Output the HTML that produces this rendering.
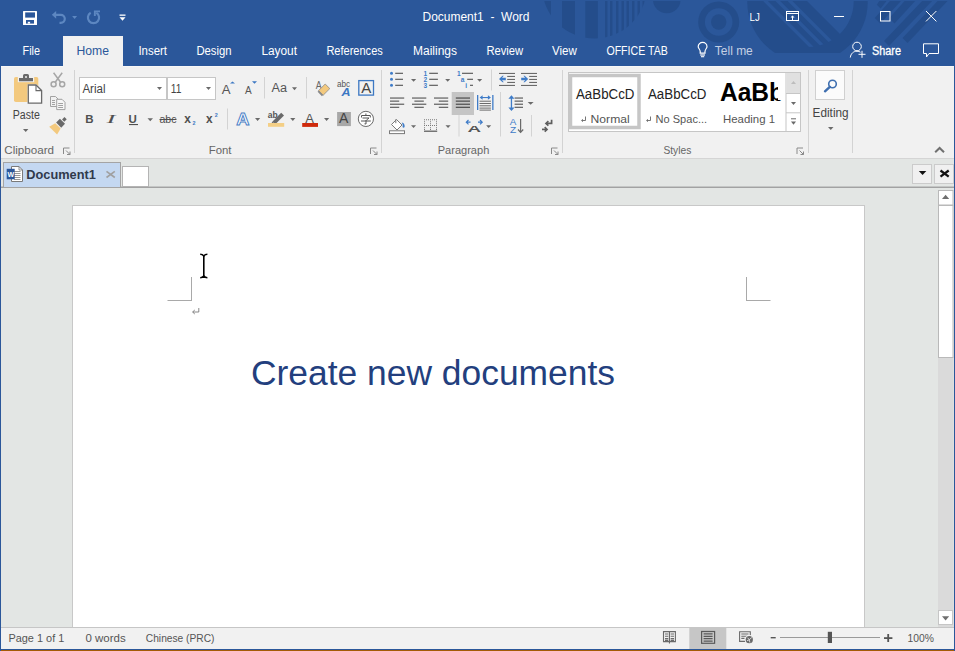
<!DOCTYPE html>
<html><head><meta charset="utf-8">
<style>
html,body{margin:0;padding:0;width:955px;height:651px;overflow:hidden;background:#e3e6e4;}
svg{position:absolute;left:0;top:0;display:block;}
text{font-family:"Liberation Sans",sans-serif;}
</style></head>
<body>
<svg width="955" height="651" viewBox="0 0 955 651">
<!-- ===== title + tabs (blue) ===== -->
<rect x="0" y="0" width="955" height="66" fill="#2b579a"/>
<g id="pattern" fill="#244d8b">
<clipPath id="cp1"><circle cx="594.5" cy="-13.9" r="52.4"/></clipPath>
<g clip-path="url(#cp1)">
<rect x="540" y="0" width="11" height="40"/>
<rect x="562" y="0" width="13" height="40"/>
<rect x="585.3" y="0" width="12.5" height="40"/>
<rect x="605" y="0" width="2.4" height="40"/><rect x="610" y="0" width="2.4" height="40"/>
<rect x="616" y="0" width="2.4" height="40"/><rect x="621.5" y="0" width="2.4" height="40"/>
<rect x="626.5" y="0" width="2.4" height="40"/><rect x="632" y="0" width="2.4" height="40"/>
<rect x="637.5" y="0" width="2.4" height="40"/><rect x="642.5" y="0" width="2.4" height="40"/>
</g>
<circle cx="666.8" cy="-0.5" r="13.8"/>
<circle cx="718.7" cy="22" r="20.5"/>
<circle cx="718.7" cy="22" r="13.8" fill="#2b579a"/>
<circle cx="718.7" cy="22" r="7.7"/>
<clipPath id="cp2"><rect x="700" y="0" width="200" height="53"/></clipPath>
<clipPath id="cp3"><circle cx="808" cy="1.3" r="45.7"/></clipPath>
<g clip-path="url(#cp2)">
<circle cx="807.5" cy="2.3" r="60.2"/>
<g clip-path="url(#cp3)" stroke="#2b579a" stroke-width="3.4">
<line x1="764.5" y1="0" x2="824.5" y2="60"/>
<line x1="776.8" y1="0" x2="836.8" y2="60"/>
<line x1="789" y1="0" x2="849" y2="60"/>
<polygon points="801,-5 900,-5 900,60 866,60" stroke="none" fill="#2b579a"/>
</g>
</g>
<polygon points="880.6,-1 888.1,-1 880.6,8.5 876.9,4.8"/>
<polygon points="891.7,-1 902.8,-1 880.3,23.5 874.8,18.0"/>
<polygon points="906.4,-1 917.0,-1 894.5,23.5 889.2,18.2"/>
<polygon points="924.0,-1 934.0,-1 889.0,46.0 884.0,41.0"/>
<polygon points="939.5,-1 949.5,-1 907.5,43.0 902.5,38.0"/>
</g>
<rect x="0" y="0" width="955" height="1" fill="#2b579a"/>
<!-- title icons -->
<g fill="#ffffff">
<rect x="23" y="11" width="14" height="14" rx="0.5"/>
<rect x="25.2" y="12.4" width="9.8" height="5.2" fill="#2b579a"/>
<rect x="26" y="20" width="8" height="3.6" fill="#2b579a"/>
<rect x="27.8" y="21.8" width="2.3" height="1.8"/>
</g>
<g fill="none" stroke="#5d87c1" stroke-width="2.2">
<path d="M54,14.8 H60.8 A4,4 0 0 1 60.8,22.8 H59.5"/>
<path d="M90.7,12.75 A5.6,5.6 0 1 0 96.3,12.75"/>
</g>
<g fill="#5d87c1">
<path d="M51.8,14.8 L56.2,10.9 L56.2,18.7 Z"/>
<path d="M72.1,15.9 H77.1 L74.6,18.9 Z"/>
<path d="M93.9,10.4 H100 V12.3 H95.8 V16 H93.9 Z"/>
</g>
<g fill="#ffffff">
<rect x="119.5" y="14.5" width="6" height="1.3"/>
<path d="M119.5,17.2 L125.5,17.2 L122.5,20.8 Z"/>
</g>
<g fill="none" stroke="#ffffff" stroke-width="1">
<rect x="786.5" y="11.5" width="12" height="9"/>
<line x1="786.5" y1="13.5" x2="798.5" y2="13.5"/>
<line x1="792.5" y1="16.5" x2="792.5" y2="20.5"/>
<rect x="880.5" y="11.5" width="9.5" height="9.5"/>
<line x1="926" y1="11" x2="936.4" y2="21.4"/>
<line x1="936.4" y1="11" x2="926" y2="21.4"/>
</g>
<path d="M790.5,17.6 L792.5,15.4 L794.5,17.6 Z" fill="#ffffff"/>
<rect x="834" y="16" width="10" height="1" fill="#ffffff"/>
<!-- tab row icons -->
<g fill="none" stroke="#ffffff" stroke-width="1">
<path d="M700.2,53.2 V51.6 C700.2,49.3 698.2,48.4 698.2,46.8 A4.4,4.4 0 0 1 707,46.8 C707,48.4 705,49.3 705,51.6 V53.2 Z" stroke="#ffffff" stroke-width="1.2"/>
<line x1="700.2" y1="55" x2="705" y2="55" stroke="#ffffff" stroke-width="1.2"/>
<line x1="701" y1="56.7" x2="704.2" y2="56.7" stroke="#ffffff" stroke-width="1.1"/>
<circle cx="857" cy="46.5" r="4.3"/>
<path d="M850.3,57.5 C850.8,53.5 853.5,51.2 857,51.2 C858.5,51.2 859.5,51.6 860.5,52.2"/>
<line x1="858.5" y1="54.3" x2="865.5" y2="54.3"/>
<line x1="862" y1="50.8" x2="862" y2="57.8"/>
<path d="M923.5,43.8 H938.5 V53.5 H929 L926.5,57 V53.5 H923.5 Z"/>
</g>

<!-- ===== ribbon ===== -->
<rect x="1" y="66" width="953" height="92" fill="#f1f1f1"/>
<rect x="1" y="66" width="953" height="1" fill="#f7f7f7"/>
<rect x="1" y="158" width="953" height="1" fill="#d5d5d5"/>
<!-- Home tab -->
<rect x="63" y="36" width="60" height="31" fill="#f1f1f1"/>
<!-- title texts -->
<g fill="#ffffff" font-size="12.5">
<text x="422.5" y="21" textLength="107" lengthAdjust="spacingAndGlyphs">Document1&#160; -&#160; Word</text>
<text x="749.6" y="20.8" font-size="11.5" textLength="10.3" lengthAdjust="spacingAndGlyphs">LJ</text>
</g>
<g fill="#ffffff" font-size="12">
<text x="22.5" y="55" textLength="17.5" lengthAdjust="spacingAndGlyphs">File</text>
<text x="138.4" y="55" textLength="28.6" lengthAdjust="spacingAndGlyphs">Insert</text>
<text x="196.4" y="55" textLength="35.2" lengthAdjust="spacingAndGlyphs">Design</text>
<text x="261.4" y="55" textLength="35.6" lengthAdjust="spacingAndGlyphs">Layout</text>
<text x="326.4" y="55" textLength="56.4" lengthAdjust="spacingAndGlyphs">References</text>
<text x="413" y="55" textLength="44" lengthAdjust="spacingAndGlyphs">Mailings</text>
<text x="486.4" y="55" textLength="36.8" lengthAdjust="spacingAndGlyphs">Review</text>
<text x="552" y="55" textLength="24.8" lengthAdjust="spacingAndGlyphs">View</text>
<text x="606.4" y="55" textLength="61.4" lengthAdjust="spacingAndGlyphs">OFFICE TAB</text>
<text x="714.8" y="55" fill="#c5d0e4" textLength="38" lengthAdjust="spacingAndGlyphs">Tell me</text>
<text x="872" y="55" stroke="#ffffff" stroke-width="0.3" textLength="29" lengthAdjust="spacingAndGlyphs">Share</text>
</g>
<text x="76.5" y="55" font-size="12" fill="#2b579a" textLength="32.5" lengthAdjust="spacingAndGlyphs">Home</text>
<!-- ===== ribbon content ===== -->
<!-- separators -->
<g fill="#d3d3d3">
<rect x="74" y="70" width="1" height="83"/>
<rect x="381" y="70" width="1" height="83"/>
<rect x="562" y="70" width="1" height="83"/>
<rect x="808" y="70" width="1" height="83"/>
<rect x="852" y="70" width="1" height="83"/>
<rect x="264" y="77" width="1" height="21.5"/>
<rect x="306" y="77" width="1" height="21.5"/>
<rect x="227" y="108.5" width="1" height="21"/>
<rect x="491" y="69.5" width="1" height="21"/>
<rect x="500" y="92" width="1" height="44.5"/>
<rect x="458.5" y="115" width="1" height="21.5"/>
<rect x="531" y="115" width="1" height="21.5"/>
</g>
<!-- group labels -->
<g fill="#666666" font-size="11">
<text x="4.3" y="153.8" textLength="49.7" lengthAdjust="spacingAndGlyphs">Clipboard</text>
<text x="208.7" y="153.8" textLength="22.8" lengthAdjust="spacingAndGlyphs">Font</text>
<text x="437.7" y="153.8" textLength="51.6" lengthAdjust="spacingAndGlyphs">Paragraph</text>
<text x="663.4" y="153.8" textLength="27.9" lengthAdjust="spacingAndGlyphs">Styles</text>
</g>
<!-- dialog launchers -->
<g fill="none" stroke="#8a8a8a" stroke-width="1">
<path d="M63.5,154 V148 H69.5"/><path d="M66,150.5 L70,154.5 M70,151.5 V154.5 H67"/>
<path d="M370.5,154 V148 H376.5"/><path d="M373,150.5 L377,154.5 M377,151.5 V154.5 H374"/>
<path d="M551.5,154 V148 H557.5"/><path d="M554,150.5 L558,154.5 M558,151.5 V154.5 H555"/>
<path d="M797,154 V148 H803"/><path d="M799.5,150.5 L803.5,154.5 M803.5,151.5 V154.5 H800.5"/>
</g>
<!-- collapse caret -->
<path d="M935.2,152.3 L939.6,148 L944,152.3" fill="none" stroke="#707070" stroke-width="2"/>

<!-- ===== Clipboard ===== -->
<rect x="14" y="77" width="24.3" height="25" rx="1.8" fill="#f3c97e"/>
<rect x="17.8" y="76.2" width="16.4" height="6" fill="#f1f1f1"/>
<path d="M19,78 H23 V75.5 Q23,74 24.5,74 H27.5 Q29,74 29,75.5 V78 H33 V81.3 H19 Z" fill="#6a6a6a"/>
<circle cx="26" cy="77" r="1" fill="#f1f1f1"/>
<path d="M27.5,84.2 H36.5 L42.4,90 V104 H27.5 Z" fill="#f1f1f1"/>
<path d="M28.3,85 H36 L41.6,90.6 V103.2 H28.3 Z" fill="#ffffff" stroke="#6a6a6a" stroke-width="1.3"/>
<path d="M36,85 V90.6 H41.6" fill="none" stroke="#6a6a6a" stroke-width="1.1"/>
<text x="12.7" y="118.8" font-size="12" fill="#444444" textLength="27.1" lengthAdjust="spacingAndGlyphs">Paste</text>
<path d="M23,129 H28.4 L25.7,132 Z" fill="#6a6a6a"/>
<!-- scissors -->
<g fill="none" stroke="#a6a6a6" stroke-width="1.5">
<circle cx="53.6" cy="84.3" r="2.5"/>
<circle cx="62.2" cy="84.3" r="2.5"/>
<path d="M55.2,82.2 L62.2,72.8 M60.6,82.2 L53.6,72.8"/>
</g>
<!-- copy -->
<g fill="#f1f1f1" stroke="#a2a2a2" stroke-width="1">
<path d="M50.5,96.5 H55.5 L58.5,99.5 V106.5 H50.5 Z"/>
<path d="M56.7,99.3 H62 L65,102.3 V109.6 H56.7 Z" fill="#f6f6f6"/>
<path d="M52,100.5 H55 M52,102.5 H55 M52,104.5 H55 M58.2,103.5 H63 M58.2,105.5 H63 M58.2,107.5 H63" />
</g>
<!-- format painter -->
<g transform="translate(58.8,125) rotate(45)">
<rect x="-1.6" y="-9.6" width="3.2" height="3.4" fill="#6a6a6a"/>
<rect x="-3.6" y="-5.2" width="7.2" height="5.4" fill="#6a6a6a"/>
<path d="M-3.8,1.2 H3.8 L5.6,8 H-5.6 Z" fill="#f3c97e"/>
</g>

<!-- ===== Font ===== -->
<rect x="79.5" y="77.5" width="87" height="22" fill="#ffffff" stroke="#c6c6c6"/>
<rect x="167.5" y="77.5" width="48" height="22" fill="#ffffff" stroke="#c6c6c6"/>
<text x="82.4" y="93" font-size="12" fill="#444444" textLength="23.1" lengthAdjust="spacingAndGlyphs">Arial</text>
<text x="170.8" y="93" font-size="12" fill="#444444" textLength="10.6" lengthAdjust="spacingAndGlyphs">11</text>
<g fill="#6a6a6a">
<path d="M157,87 H162 L159.5,90 Z"/>
<path d="M206,87 H211 L208.5,90 Z"/>
<path d="M292,87.2 H297 L294.5,90.2 Z"/>
<path d="M147.5,118.2 H153 L150.25,121.2 Z"/>
<path d="M255,118 H260.2 L257.6,121 Z"/>
<path d="M290.2,118 H295.4 L292.8,121 Z"/>
<path d="M324,118 H329.2 L326.6,121 Z"/>
</g>
<g fill="#555555">
<text x="221.8" y="93.8" font-size="13.2">A</text>
<text x="245" y="93.8" font-size="10">A</text>
<text x="271.5" y="91.6" font-size="12" textLength="15.5" lengthAdjust="spacingAndGlyphs">Aa</text>
</g>
<g fill="#3c78c3">
<path d="M230,83.6 L232.5,81.4 L235,83.6 Z"/>
<path d="M252,81.3 H257 L254.5,83.8 Z"/>
</g>
<g fill="#505050">
<text x="85.2" y="122.7" font-size="11.5" font-weight="bold">B</text>
<text x="106.5" y="122.7" font-size="12" font-style="italic" style="font-family:'Liberation Serif',serif" textLength="9" lengthAdjust="spacingAndGlyphs">I</text>
<text x="128.6" y="122.7" font-size="11.5" font-weight="bold">U</text>
<rect x="129" y="124" width="9" height="1.1"/>
<text x="159.5" y="122.7" font-size="11" textLength="17" lengthAdjust="spacingAndGlyphs">abc</text>
<rect x="159.5" y="119" width="17" height="1"/>
<text x="184.2" y="122.7" font-size="13" font-weight="bold" textLength="6.6" lengthAdjust="spacingAndGlyphs">x</text>
<text x="206.1" y="122.7" font-size="13" font-weight="bold" textLength="6.6" lengthAdjust="spacingAndGlyphs">x</text>
</g>
<g fill="#3c78c3" font-size="5.4" font-weight="bold">
<text x="192.6" y="125.1">2</text>
<text x="214.7" y="117">2</text>
</g>
<!-- text effects A -->
<text x="236.2" y="124.6" font-size="17" font-weight="bold" fill="#ffffff" stroke="#4a80c6" stroke-width="0.9" textLength="13.2" lengthAdjust="spacingAndGlyphs">A</text>
<!-- highlighter -->
<text x="267.8" y="118.3" font-size="8.5" font-weight="bold" fill="#555555">ab</text>
<path d="M272.5,121.5 L281.2,112.8 L284,115.6 L275.3,124.3 Z" fill="#6a6a6a"/>
<path d="M271.5,123.2 L272.5,121.5 L275.3,124.3 Z" fill="#6a6a6a"/>
<rect x="268" y="123" width="16.2" height="3.8" fill="#f4cf86"/>
<!-- font colour -->
<text x="305.2" y="122.5" font-size="13" fill="#555555">A</text>
<rect x="302.2" y="123" width="15.8" height="3.9" fill="#cf2a0c"/>
<!-- shaded A -->
<rect x="337.1" y="112" width="13.8" height="14.1" fill="#a8a8a8"/>
<text x="339" y="123.3" font-size="14" fill="#444444">A</text>
<!-- enclosed char -->
<circle cx="365.9" cy="118.9" r="7.6" fill="#ffffff" stroke="#6a6a6a" stroke-width="1"/>
<g fill="none" stroke="#555" stroke-width="1">
<path d="M365.9,113.5 V115 M361.5,117.5 V115.5 H370.3 V117.5 M362.5,118 H369 L366.5,120 M361,121 H370.8 M366,120 V124 L364.5,123.8"/>
</g>
<!-- clear formatting -->
<text x="315.8" y="88.9" font-size="11" fill="#666666" textLength="6" lengthAdjust="spacingAndGlyphs">A</text>
<path d="M325.2,84 L329.8,88.6 L323.2,95.2 L318.6,90.6 Z" fill="#f3c97e" stroke="#8a8a8a" stroke-width="0.8"/>
<path d="M318.2,91.2 L322.6,95.6" stroke="#8a8a8a" stroke-width="1.8"/>
<!-- abc A -->
<text x="337" y="86.6" font-size="8.2" fill="#555555" textLength="13.2" lengthAdjust="spacingAndGlyphs">abc</text>
<text x="341.5" y="95.6" font-size="10.5" font-weight="bold" font-style="italic" fill="#3c78c3" textLength="9" lengthAdjust="spacingAndGlyphs">A</text>
<!-- boxed A -->
<rect x="358.8" y="80.6" width="14.7" height="14.5" fill="none" stroke="#3c78c3" stroke-width="1.3"/>
<text x="361.2" y="93" font-size="14.3" fill="#444444" textLength="10" lengthAdjust="spacingAndGlyphs">A</text>
<!-- ===== Paragraph ===== -->
<g fill="#3f7cc8">
<circle cx="391.5" cy="73.3" r="1.5"/><circle cx="391.5" cy="79.3" r="1.5"/><circle cx="391.5" cy="85.3" r="1.5"/>
</g>
<g fill="#6a6a6a">
<rect x="395.2" y="72.7" width="7.8" height="1.3"/><rect x="395.2" y="78.7" width="7.8" height="1.3"/><rect x="395.2" y="84.7" width="7.8" height="1.3"/>
<rect x="429.2" y="72.7" width="8.7" height="1.3"/><rect x="429.2" y="78.7" width="8.7" height="1.3"/><rect x="429.2" y="84.7" width="8.7" height="1.3"/>
<rect x="462" y="72.7" width="11" height="1.3"/><rect x="467.2" y="78.7" width="5.8" height="1.3"/><rect x="470" y="84.7" width="3" height="1.3"/>
<path d="M411,79 H416.2 L413.6,81.8 Z"/>
<path d="M445.2,79 H450.2 L447.7,81.8 Z"/>
<path d="M477.1,79 H482.2 L479.65,81.8 Z"/>
<path d="M411,125.2 H416.1 L413.55,128 Z"/>
<path d="M445.5,125.2 H450.6 L448.05,128 Z"/>
<path d="M486.1,125.2 H491.2 L488.65,128 Z"/>
<path d="M527.7,102 H533.6 L530.65,104.8 Z"/>
</g>
<g fill="#3f7cc8" font-size="6.6" font-weight="bold">
<text x="423.4" y="76">1</text><text x="423.4" y="82">2</text><text x="423.4" y="88">3</text>
<text x="457" y="76">1</text><text x="460.8" y="82">a</text><text x="465.3" y="88">i</text>
</g>
<!-- align -->
<g fill="#6a6a6a">
<rect x="390" y="97.4" width="14.2" height="1.3"/><rect x="390" y="100.5" width="9.2" height="1.3"/><rect x="390" y="103.6" width="14.2" height="1.3"/><rect x="390" y="106.7" width="9.2" height="1.3"/>
<rect x="412" y="97.4" width="14.3" height="1.3"/><rect x="414.4" y="100.5" width="9.4" height="1.3"/><rect x="412" y="103.6" width="14.3" height="1.3"/><rect x="414.4" y="106.7" width="9.4" height="1.3"/>
<rect x="434" y="97.4" width="14.2" height="1.3"/><rect x="438.8" y="100.5" width="9.4" height="1.3"/><rect x="434" y="103.6" width="14.2" height="1.3"/><rect x="438.8" y="106.7" width="9.4" height="1.3"/>
</g>
<rect x="451.7" y="92" width="22.3" height="23" fill="#c5c5c5"/>
<g fill="#555555">
<rect x="455.8" y="97.4" width="14.2" height="1.3"/><rect x="455.8" y="100.5" width="14.2" height="1.3"/><rect x="455.8" y="103.6" width="14.2" height="1.3"/><rect x="455.8" y="106.7" width="14.2" height="1.3"/>
</g>
<!-- distributed -->
<g fill="#3f7cc8">
<rect x="477" y="95" width="1.3" height="15"/><rect x="492.2" y="95" width="1.3" height="15"/>
<rect x="481" y="97" width="8.5" height="1.1"/>
<path d="M479.6,97.55 L482.6,95.3 V99.8 Z M490.9,97.55 L487.9,95.3 V99.8 Z"/>
</g>
<g fill="#6a6a6a">
<rect x="479.5" y="100.7" width="11.4" height="1"/><rect x="479.5" y="103" width="11.4" height="1"/><rect x="479.5" y="105.3" width="11.4" height="1"/><rect x="479.5" y="107.6" width="11.4" height="1"/><rect x="479.5" y="109.6" width="11.4" height="1"/>
</g>
<!-- line spacing -->
<g fill="#3f7cc8">
<rect x="510.8" y="97" width="1.3" height="12"/>
<path d="M508.4,98.8 L511.45,95.3 L514.5,98.8 Z M508.4,107.5 L511.45,111 L514.5,107.5 Z"/>
</g>
<g fill="#6a6a6a">
<rect x="514.6" y="97.4" width="8.4" height="1.3"/><rect x="514.6" y="100.5" width="8.4" height="1.3"/><rect x="514.6" y="103.6" width="8.4" height="1.3"/><rect x="514.6" y="106.7" width="8.4" height="1.3"/>
</g>
<!-- indent -->
<g fill="#6a6a6a">
<rect x="499" y="72.9" width="16" height="1.1"/><rect x="507.2" y="75.9" width="7.8" height="1.1"/><rect x="507.2" y="78.9" width="7.8" height="1.1"/><rect x="507.2" y="81.9" width="7.8" height="1.1"/><rect x="499" y="84.9" width="16" height="1.1"/>
<rect x="521" y="72.9" width="16" height="1.1"/><rect x="529.2" y="75.9" width="7.8" height="1.1"/><rect x="529.2" y="78.9" width="7.8" height="1.1"/><rect x="529.2" y="81.9" width="7.8" height="1.1"/><rect x="521" y="84.9" width="16" height="1.1"/>
</g>
<g fill="#3f7cc8">
<path d="M499,79 L502.5,75.8 H503.8 L502,77.7 H505.8 V80.3 H502 L503.8,82.2 H502.5 Z"/>
<path d="M528.2,79 L524.7,75.8 H523.4 L525.2,77.7 H521.2 V80.3 H525.2 L523.4,82.2 H524.7 Z"/>
</g>
<!-- shading -->
<g fill="none" stroke="#7a7a7a" stroke-width="1">
<path d="M391.5,124.5 L396.5,119.5 L402,125 L397,130 Z" fill="#ffffff"/>
<path d="M395.8,119.3 V123.2"/>
<rect x="389.5" y="130.8" width="15" height="2.8" fill="#ffffff"/>
</g>
<path d="M401.8,122.5 Q405,123 404.6,127 Q403.5,128.5 402.5,127 Q403.5,125.5 401.8,122.5 Z" fill="#3f7cc8"/>
<!-- borders -->
<g fill="#7a7a7a">
<path d="M424,119.2 h1v1h-1z M426,119.2 h1v1h-1z M428,119.2 h1v1h-1z M430,119.2 h1v1h-1z M432,119.2 h1v1h-1z M434,119.2 h1v1h-1z M436,119.2 h1v1h-1z"/>
<path d="M424,125 h1v1h-1z M426,125 h1v1h-1z M428,125 h1v1h-1z M430,125 h1v1h-1z M432,125 h1v1h-1z M434,125 h1v1h-1z M436,125 h1v1h-1z"/>
<path d="M424,121.2 h1v1h-1z M424,123.2 h1v1h-1z M424,127.2 h1v1h-1z M424,129 h1v1h-1z M430,121.2 h1v1h-1z M430,123.2 h1v1h-1z M430,127.2 h1v1h-1z M430,129 h1v1h-1z M436,121.2 h1v1h-1z M436,123.2 h1v1h-1z M436,127.2 h1v1h-1z M436,129 h1v1h-1z"/>
<rect x="424" y="130.6" width="13.2" height="1.2" fill="#555"/>
</g>
<!-- text direction -->
<text x="467.6" y="132" font-size="9.5" font-weight="bold" fill="#555555" textLength="13.6" lengthAdjust="spacingAndGlyphs">A</text>
<g fill="none" stroke="#3f7cc8" stroke-width="1.2">
<path d="M466.5,122.2 H470.5 M478,122.2 H482 M468.5,120 L466.3,122.2 L468.5,124.4 M480,120 L482.2,122.2 L480,124.4"/>
</g>
<!-- sort -->
<g fill="#3f7cc8" font-size="8.2">
<text x="509.8" y="125.2" textLength="6.6" lengthAdjust="spacingAndGlyphs">A</text><text x="510.1" y="132.8" textLength="6.2" lengthAdjust="spacingAndGlyphs">Z</text>
</g>
<g fill="none" stroke="#6a6a6a" stroke-width="1.2">
<path d="M520.6,119 V132 M518,129.5 L520.6,132.3 L523.2,129.5"/>
</g>
<!-- show/hide -->
<g fill="none" stroke="#5f5f5f" stroke-width="1.7" stroke-linejoin="miter">
<path d="M551.6,119.8 V123.4 H546"/>
<path d="M548.4,121.2 L546,123.4 L548.4,125.6"/>
<path d="M542,129.4 H547"/>
<path d="M544.7,127.2 L547,129.4 L544.7,131.6"/>
</g>
<!-- ===== Styles ===== -->
<rect x="568.5" y="72.5" width="232" height="59" fill="#ffffff" stroke="#c6c6c6"/>
<rect x="570.5" y="75.5" width="68.5" height="52" fill="none" stroke="#c6c6c6" stroke-width="3.5"/>
<g font-size="14" fill="#222222">
<text x="576" y="98.5" textLength="58.4" lengthAdjust="spacingAndGlyphs">AaBbCcD</text>
<text x="648" y="98.5" textLength="58.4" lengthAdjust="spacingAndGlyphs">AaBbCcD</text>
</g>
<text x="720" y="101.4" font-size="26.5" font-weight="bold" fill="#000000" textLength="64" lengthAdjust="spacingAndGlyphs">AaBb</text>
<rect x="778" y="78" width="8" height="22" fill="#ffffff"/>
<g font-size="11.5" fill="#555555">
<text x="590.6" y="122.7" textLength="39.1" lengthAdjust="spacingAndGlyphs">Normal</text>
<text x="655.6" y="122.7" textLength="51.5" lengthAdjust="spacingAndGlyphs">No Spac...</text>
<text x="723" y="122.7" textLength="52" lengthAdjust="spacingAndGlyphs">Heading 1</text>
</g>
<g fill="none" stroke="#666" stroke-width="0.9">
<path d="M585.5,116.5 V120.5 H581.8 M583,119.3 L581.6,120.5 L583,121.7"/>
<path d="M650.5,116.5 V120.5 H646.8 M648,119.3 L646.6,120.5 L648,121.7"/>
</g>
<rect x="786" y="72.5" width="14.5" height="59" fill="#ffffff" stroke="#c6c6c6"/>
<rect x="786.5" y="73" width="13.5" height="20.4" fill="#e0e0e0"/>
<rect x="786" y="93" width="14.5" height="1" fill="#c6c6c6"/>
<rect x="786" y="112.3" width="14.5" height="1" fill="#c6c6c6"/>
<path d="M791,84 L793.5,81 L796,84 Z" fill="#bdbdbd"/>
<path d="M791,102 H796 L793.5,105 Z" fill="#6a6a6a"/>
<rect x="791" y="118.3" width="5" height="1" fill="#6a6a6a"/>
<path d="M791,121.6 H796 L793.5,124.8 Z" fill="#6a6a6a"/>
<!-- ===== Editing ===== -->
<rect x="815.5" y="70.5" width="29" height="29" fill="#fbfbfb" stroke="#d0d0d0"/>
<circle cx="832.5" cy="84" r="3.8" fill="none" stroke="#3f6fb0" stroke-width="1.6"/>
<path d="M829.8,86.8 L825,91.3" stroke="#3f6fb0" stroke-width="2.4" stroke-linecap="round"/>
<text x="812.6" y="117.2" font-size="12" fill="#444444" textLength="36" lengthAdjust="spacingAndGlyphs">Editing</text>
<path d="M828,127 H833.5 L830.75,130 Z" fill="#6a6a6a"/>
<!-- ===== office tab bar ===== -->
<rect x="1" y="159" width="953" height="28" fill="#e3e6e4"/>
<rect x="1" y="186" width="953" height="1" fill="#c4c6c5"/>
<rect x="1" y="187" width="953" height="1" fill="#a2a2a2"/>
<!-- tab -->
<rect x="3.5" y="162.5" width="117" height="25" fill="#c4d8f1" stroke="#a4a4a4"/>
<!-- word doc icon -->
<path d="M11.5,166.5 H19 L22.5,170 V181.5 H11.5 Z" fill="#ffffff" stroke="#7a7a7a" stroke-width="1"/>
<path d="M19,166.5 V170 H22.5" fill="none" stroke="#7a7a7a" stroke-width="0.8"/>
<g fill="#8a8a8a"><rect x="14" y="171" width="6.5" height="0.9"/><rect x="14" y="173" width="6.5" height="0.9"/><rect x="14" y="175" width="6.5" height="0.9"/><rect x="14" y="177" width="6.5" height="0.9"/><rect x="14" y="179" width="6.5" height="0.9"/></g>
<rect x="6.7" y="168.8" width="8" height="10.5" fill="#2b579a"/>
<text x="7.4" y="177" font-size="7" font-weight="bold" fill="#ffffff">W</text>
<text x="26.3" y="178.8" font-size="13" font-weight="bold" fill="#303a4c" textLength="69.5" lengthAdjust="spacingAndGlyphs">Document1</text>
<g stroke="#a0a0a0" stroke-width="1.6"><line x1="106.5" y1="171.3" x2="114.8" y2="177.5"/><line x1="114.8" y1="171.3" x2="106.5" y2="177.5"/></g>
<rect x="122.5" y="166.5" width="26" height="20" fill="#ffffff" stroke="#b4b4b4"/>
<!-- right buttons -->
<rect x="912.5" y="164.5" width="19" height="19" fill="#f0f0f0" stroke="#cbcbcb"/>
<rect x="934.5" y="164.5" width="19" height="19" fill="#f0f0f0" stroke="#cbcbcb"/>
<path d="M918.8,171 H926.3 L922.55,175 Z" fill="#111111"/>
<g stroke="#111111" stroke-width="2.2"><line x1="940.5" y1="170.5" x2="948.7" y2="176.7"/><line x1="948.7" y1="170.5" x2="940.5" y2="176.7"/></g>
<!-- ===== doc area ===== -->
<rect x="1" y="188" width="953" height="439" fill="#e3e6e4"/>
<rect x="72" y="205" width="793" height="422" fill="#c8c8c8"/>
<rect x="73" y="206" width="791" height="421" fill="#ffffff"/>
<rect x="1" y="627" width="953" height="1" fill="#c6c6c6"/>
<!-- scrollbar -->
<rect x="938" y="188" width="16" height="439" fill="#e3e6e4"/>
<rect x="938" y="357.5" width="15.5" height="269.5" fill="#dadada"/>
<rect x="938.5" y="190.5" width="14.5" height="14.5" fill="#ffffff" stroke="#b9b9b9"/>
<rect x="938.5" y="205.5" width="14.5" height="152" fill="#ffffff" stroke="#b9b9b9"/>
<rect x="938.5" y="610.5" width="14" height="14" fill="#ffffff" stroke="#c6c6c6"/>
<path d="M942,199 L945.6,194.8 L949.2,199 Z" fill="#6f6f6f"/>
<path d="M942,616.2 H949.2 L945.6,620.4 Z" fill="#6f6f6f"/>
<!-- doc content -->
<g fill="#a9a9a9">
<rect x="191" y="277" width="1" height="24"/><rect x="167.5" y="300" width="24.5" height="1"/>
<rect x="746" y="277" width="1" height="24"/><rect x="746" y="300" width="24.5" height="1"/>
</g>
<g fill="none" stroke="#7a7a7a" stroke-width="0.9">
<path d="M198.8,308 V312 H192.8 M194.8,310 L192.6,312 L194.8,314"/>
</g>
<!-- I-beam -->
<g fill="none" stroke="#000000" stroke-width="1.6">
<path d="M203.8,255 V277.5"/>
<path d="M200.2,254.3 Q202.5,254.3 203.8,256 Q205.1,254.3 207.4,254.3"/>
<path d="M200.2,277.8 Q202.5,277.8 203.8,276 Q205.1,277.8 207.4,277.8"/>
</g>
<text x="251" y="385.1" font-size="35.5" fill="#233f7e" textLength="364" lengthAdjust="spacingAndGlyphs">Create new documents</text>
<!-- ===== status bar ===== -->
<rect x="1" y="628" width="953" height="21" fill="#f1f1f1"/>
<g fill="#555555" font-size="11">
<text x="8.4" y="641.9" textLength="55.9" lengthAdjust="spacingAndGlyphs">Page 1 of 1</text>
<text x="85.5" y="641.9" textLength="40.2" lengthAdjust="spacingAndGlyphs">0 words</text>
<text x="145.8" y="641.9" textLength="68.7" lengthAdjust="spacingAndGlyphs">Chinese (PRC)</text>
<text x="907.5" y="641.9" textLength="26.4" lengthAdjust="spacingAndGlyphs">100%</text>
</g>
<rect x="689.3" y="628" width="37" height="21" fill="#c6c6c6"/>
<!-- read mode -->
<g fill="none" stroke="#6a6a6a" stroke-width="1.1">
<path d="M663.5,631.6 H675.4 V641.6 H663.5 Z"/>
<path d="M669.45,631.6 V643.6"/>
<path d="M665,634 H668.3 M665,636.3 H668.3 M665,638.6 H668.3 M665,640.4 H668.3 M670.6,634 H674 M670.6,636.3 H674 M670.6,638.6 H674 M670.6,640.4 H674"/>
</g>
<!-- print layout -->
<g fill="none" stroke="#5a5a5a" stroke-width="1.2">
<rect x="701.6" y="631.5" width="13" height="11.8"/>
<path d="M703.6,633.9 H712.6 M703.6,636.3 H712.6 M703.6,638.7 H712.6 M703.6,641.1 H712.6"/>
</g>
<!-- web layout -->
<g fill="none" stroke="#6a6a6a" stroke-width="1.1">
<path d="M745.5,641.4 H739.6 V631.8 H750.3 V635.5"/>
<path d="M741.3,634 H748.5 M741.3,636.2 H747 M741.3,638.4 H744.5"/>
</g>
<circle cx="749.3" cy="639.7" r="4.6" fill="#f1f1f1"/>
<circle cx="749.3" cy="639.7" r="3.6" fill="#6a6a6a"/>
<path d="M747.6,637.8 Q749.6,638.8 749.9,642.5 M747,640.8 Q749,640.3 751.8,637.5" stroke="#f1f1f1" stroke-width="0.8" fill="none"/>
<!-- zoom -->
<rect x="770.7" y="637" width="5" height="1.4" fill="#555"/>
<rect x="780" y="637" width="100" height="1" fill="#9a9a9a"/>
<rect x="827.8" y="631.8" width="4.2" height="11.2" fill="#555"/>
<rect x="884" y="637.2" width="8.4" height="1.8" fill="#555"/>
<rect x="887.3" y="634" width="1.8" height="8" fill="#555"/>

<rect x="0" y="649" width="955" height="1" fill="#2b579a"/>
<rect x="0" y="650" width="955" height="1" fill="#a55b06"/>
<!-- window borders -->
<rect x="0" y="0" width="1" height="651" fill="#2b579a"/>
<rect x="954" y="0" width="1" height="651" fill="#2b579a"/>
</svg>
</body></html>
